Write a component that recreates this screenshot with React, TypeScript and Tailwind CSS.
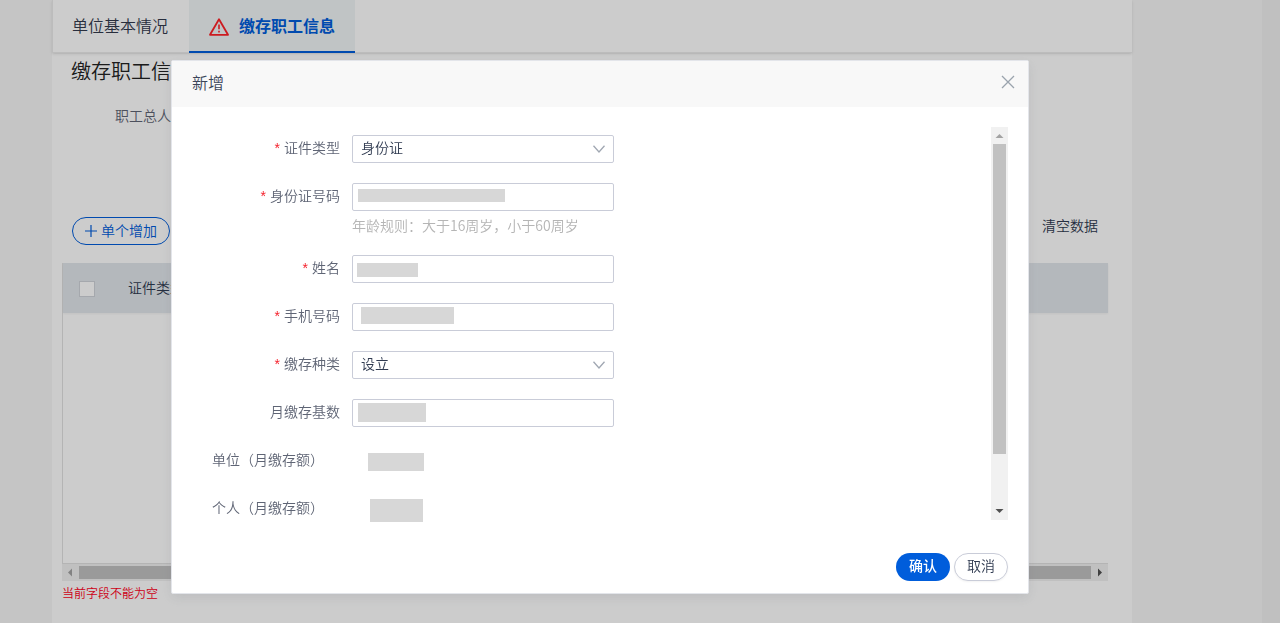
import type { ReactNode } from "react";

function Field({
  id,
  label,
  required,
  hint,
  children,
}: {
  id: string;
  label: string;
  required?: boolean;
  hint?: string;
  children: ReactNode;
}) {
  return (
    <div className="flex gap-3 pb-5">
      <label
        htmlFor={id}
        className="w-37 shrink-0 text-right text-sm leading-6 text-[#5f6575]"
      >
        {required && <span className="mr-1 font-['Liberation_Sans'] text-[#f5222d]">*</span>}
        {label}
      </label>
      <div className="w-[262px]">
        <div className="relative">{children}</div>
        {hint && <p className="h-6 pt-0.5 text-sm leading-6 text-[#b5b5b5]">{hint}</p>}
      </div>
    </div>
  );
}

function TextField({
  id,
  label,
  mask,
  required,
  hint,
}: {
  id: string;
  label: string;
  mask: string;
  required?: boolean;
  hint?: string;
}) {
  return (
    <Field id={id} label={label} required={required} hint={hint}>
      <input
        id={id}
        type="text"
        className="block h-7 w-full rounded-xs border border-[#c9ccd8] bg-white px-2 text-sm outline-none"
      />
      <span className={`pointer-events-none absolute bg-[#d7d7d7] ${mask}`} />
    </Field>
  );
}

function SelectField({ id, label, options }: { id: string; label: string; options: string[] }) {
  return (
    <Field id={id} label={label} required>
      <select
        id={id}
        className="block h-7 w-full appearance-none rounded-xs border border-[#c9ccd8] bg-white px-2 pb-1 text-sm leading-5 text-[#2f3a50] outline-none"
      >
        {options.map((option) => (
          <option key={option}>{option}</option>
        ))}
      </select>
      <svg
        aria-hidden="true"
        viewBox="0 0 12 8"
        fill="none"
        className="pointer-events-none absolute top-2.5 right-[9px] h-2 w-3"
      >
        <path d="M0.5 0.8L6 7L11.5 0.8" stroke="#a0a7b2" strokeWidth="1.3" />
      </svg>
    </Field>
  );
}

function Amount({ label, mask }: { label: string; mask: string }) {
  return (
    <div className="flex h-12 items-start gap-7">
      <span className="w-37 shrink-0 pr-4 text-right text-sm leading-6 whitespace-nowrap text-[#5f6575]">
        {label}
      </span>
      <span className={`bg-[#d7d7d7] ${mask}`} />
    </div>
  );
}

function Background() {
  return (
    <div className="flex min-h-screen bg-[#f7f7f7]">
      <main className="ml-13 w-full max-w-[1080px] bg-white">
        <nav className="flex h-[53px] border-b border-l border-[#ececec] shadow-sm">
          <button type="button" className="h-[50px] pr-[21px] pl-[19px] text-base text-[#333a4d]">
            单位基本情况
          </button>
          <button
            type="button"
            className="flex h-[53px] items-center gap-2.5 border-b-2 border-[#005ddb] bg-[#f0f5f7] px-5 pb-0.5 text-base font-bold text-[#005ddb]"
          >
            <svg aria-hidden="true" viewBox="0 0 20 18" fill="none" className="mt-1 h-[18px] w-5">
              <path
                d="M10 1.2L19 16.8H1Z"
                stroke="#ff2228"
                strokeWidth="1.8"
                strokeLinejoin="round"
              />
              <path d="M10 6.5V11.2M10 12.7V14.4" stroke="#ff2228" strokeWidth="1.6" />
            </svg>
            缴存职工信息
          </button>
        </nav>

        <section className="pr-6 pl-2.5">
          <h1 className="pt-0.5 pl-[9px] text-xl leading-8 text-[#222222]">缴存职工信息</h1>
          <p className="pt-[18px] pl-[53px] text-sm leading-5 text-[#5f6575]">职工总人数</p>

          <div className="flex items-start justify-between px-2.5 pt-23">
            <button
              type="button"
              className="flex h-7 w-[98px] items-center justify-center gap-1 rounded-full border border-[#005ddb] pb-0.5 text-sm whitespace-nowrap text-[#005ddb]"
            >
              <svg aria-hidden="true" viewBox="0 0 12 12" className="mt-0.5 size-3">
                <path d="M6 0V12M0 6H12" stroke="currentColor" strokeWidth="1.2" />
              </svg>
              单个增加
            </button>
            <button type="button" className="text-sm leading-4 text-[#2f3a50]">
              清空数据
            </button>
          </div>

          <div className="mt-[18px] h-[301px] border-b border-l border-[#e2e2e2]">
            <table className="w-full bg-[#e2e7ec] text-left shadow-xs">
              <thead>
                <tr className="h-[50px]">
                  <th className="w-[65px] pl-4">
                    <input
                      type="checkbox"
                      aria-label="全选"
                      className="mt-0.5 block size-4 appearance-none border border-[#cfd2d9] bg-white"
                    />
                  </th>
                  <th className="pb-0.5 text-sm font-[350] text-[#2f3a50]">证件类型</th>
                </tr>
              </thead>
            </table>
          </div>
          <div className="flex h-[17px] items-center bg-[#f1f1f1]">
            <svg aria-hidden="true" viewBox="0 0 17 17" className="size-[17px]">
              <path d="M10 4.5V12.5L6 8.5Z" fill="#a3a3a3" />
            </svg>
            <div className="h-[13px] flex-1 bg-[#c1c1c1]" />
            <svg aria-hidden="true" viewBox="0 0 17 17" className="size-[17px]">
              <path d="M7 4.5V12.5L11 8.5Z" fill="#505050" />
            </svg>
          </div>
          <p className="pt-1 text-xs leading-4 text-[#ff0022]">当前字段不能为空</p>
        </section>
      </main>
      <div className="ml-auto w-[18px] bg-[#f1f1f1]" />
    </div>
  );
}

function AddDialog() {
  return (
    <div className="fixed inset-0 flex items-start justify-center bg-black/20 pt-15 pr-20">
      <div
        role="dialog"
        aria-modal="true"
        aria-labelledby="dialog-title"
        className="w-full max-w-[858px] rounded-xs border border-[#e3e5ea] bg-white shadow-[0_4px_12px_rgba(100,110,120,0.15)]"
      >
        <header className="flex h-[46px] items-center justify-between bg-[#f8f8f8] pr-[13px] pb-1 pl-5">
          <h2 id="dialog-title" className="text-base text-[#3b4559]">
            新增
          </h2>
          <button type="button" aria-label="关闭">
            <svg aria-hidden="true" viewBox="0 0 14 14" className="size-3.5">
              <path d="M1 1L13 13M13 1L1 13" stroke="#9aa3ad" strokeWidth="1.3" />
            </svg>
          </button>
        </header>

        <div className="flex p-5">
          <form className="h-[393px] flex-1 pt-2">
            <SelectField id="id-type" label="证件类型" options={["身份证", "护照"]} />
            <TextField
              id="id-number"
              label="身份证号码"
              required
              hint="年龄规则：大于16周岁，小于60周岁"
              mask="top-1.5 left-1.5 h-[13px] w-[147px]"
            />
            <TextField id="name" label="姓名" required mask="top-2 left-[5px] h-3.5 w-[61px]" />
            <TextField id="phone" label="手机号码" required mask="top-1 left-[9px] h-[17px] w-[93px]" />
            <SelectField id="deposit-type" label="缴存种类" options={["设立", "转入"]} />
            <TextField id="base" label="月缴存基数" mask="top-1 left-1.5 h-[19px] w-[68px]" />
            <Amount label="单位（月缴存额）" mask="mt-1.5 h-[18px] w-14" />
            <Amount label="个人（月缴存额）" mask="mt-1 ml-0.5 h-[23px] w-[53px]" />
          </form>
          <div className="flex w-[17px] flex-col items-center bg-[#f1f1f1]">
            <svg aria-hidden="true" viewBox="0 0 17 17" className="size-[17px]">
              <path d="M4.5 11H12.5L8.5 7Z" fill="#a3a3a3" />
            </svg>
            <div className="h-[310px] w-[13px] bg-[#c1c1c1]" />
            <svg aria-hidden="true" viewBox="0 0 17 17" className="mt-auto size-[17px]">
              <path d="M4.5 6H12.5L8.5 10Z" fill="#505050" />
            </svg>
          </div>
        </div>

        <footer className="flex justify-end gap-1 px-5 pt-[13px] pb-3">
          <button
            type="button"
            className="h-7 w-[54px] rounded-full bg-[#005ddb] pb-1 text-sm font-medium text-white"
          >
            确认
          </button>
          <button
            type="button"
            className="h-7 w-[54px] rounded-full border border-[#c9ccd8] bg-white pb-1 text-sm text-[#2f3a50] shadow-xs"
          >
            取消
          </button>
        </footer>
      </div>
    </div>
  );
}

export default function App() {
  return (
    <div className="font-['Noto_Sans_CJK_SC',sans-serif] font-[350]">
      <Background />
      <AddDialog />
    </div>
  );
}
